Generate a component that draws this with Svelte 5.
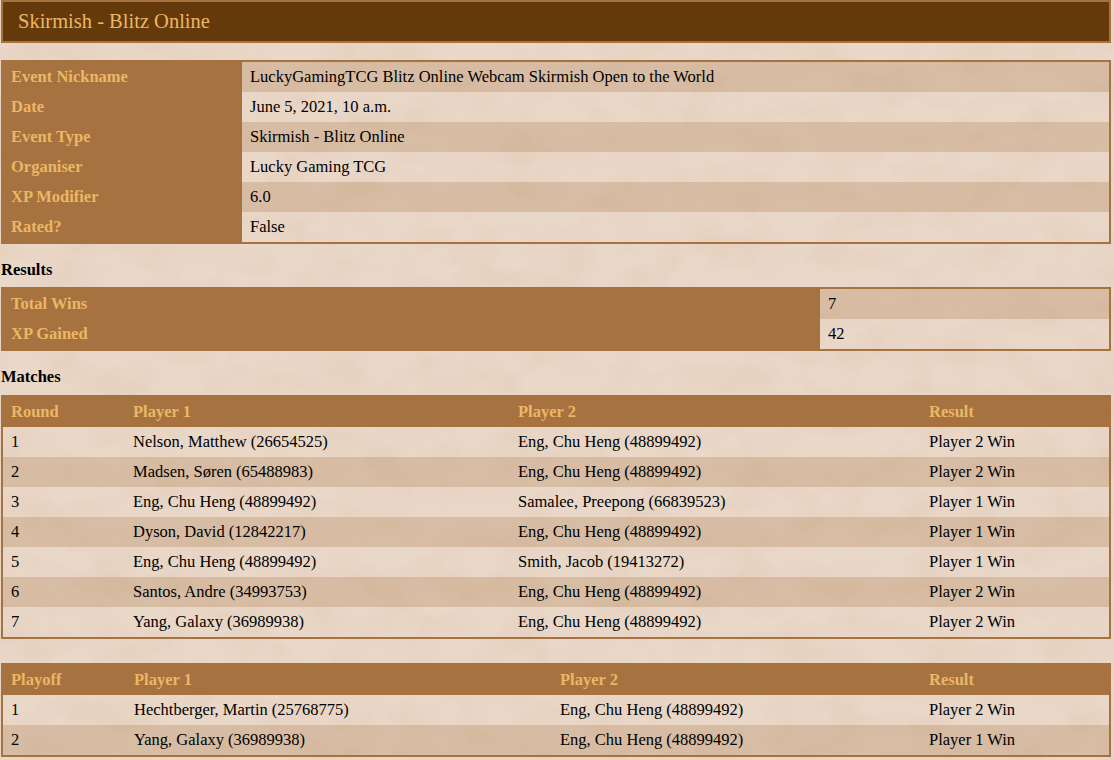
<script>
  const info = [
    ['Event Nickname', 'LuckyGamingTCG Blitz Online Webcam Skirmish Open to the World'],
    ['Date', 'June 5, 2021, 10 a.m.'],
    ['Event Type', 'Skirmish - Blitz Online'],
    ['Organiser', 'Lucky Gaming TCG'],
    ['XP Modifier', '6.0'],
    ['Rated?', 'False']
  ];
  const results = [
    ['Total Wins', '7'],
    ['XP Gained', '42']
  ];
  const me = 'Eng, Chu Heng (48899492)';
  const matches = [
    ['1', 'Nelson, Matthew (26654525)', me, 'Player 2 Win'],
    ['2', 'Madsen, Søren (65488983)', me, 'Player 2 Win'],
    ['3', me, 'Samalee, Preepong (66839523)', 'Player 1 Win'],
    ['4', 'Dyson, David (12842217)', me, 'Player 1 Win'],
    ['5', me, 'Smith, Jacob (19413272)', 'Player 1 Win'],
    ['6', 'Santos, Andre (34993753)', me, 'Player 2 Win'],
    ['7', 'Yang, Galaxy (36989938)', me, 'Player 2 Win']
  ];
  const playoffs = [
    ['1', 'Hechtberger, Martin (25768775)', me, 'Player 2 Win'],
    ['2', 'Yang, Galaxy (36989938)', me, 'Player 1 Win']
  ];
</script>

<!-- parchment texture behind everything -->
<svg class="paper" aria-hidden="true" width="1114" height="760">
  <filter id="grain" x="0" y="0" width="100%" height="100%">
    <feTurbulence type="fractalNoise" baseFrequency="0.022 0.03" numOctaves="6" seed="11" />
    <feColorMatrix values="0 0 0 0 0.74  0 0 0 0 0.56  0 0 0 0 0.42  0.7 0 0 0 -0.26" />
  </filter>
  <rect width="1114" height="760" filter="url(#grain)" />
</svg>

<div class="page">
  <header><h1>Skirmish - Blitz Online</h1></header>

  <table class="info">
    <colgroup><col class="c-label" /><col /></colgroup>
    <tbody>
      {#each info as [label, value]}
        <tr><th>{label}</th><td>{value}</td></tr>
      {/each}
    </tbody>
  </table>

  <h2>Results</h2>
  <table class="results">
    <colgroup><col class="c-res" /><col /></colgroup>
    <tbody>
      {#each results as [label, value]}
        <tr><th>{label}</th><td>{value}</td></tr>
      {/each}
    </tbody>
  </table>

  <h2>Matches</h2>
  <table class="list">
    <colgroup><col class="m1" /><col class="m2" /><col class="m3" /><col /></colgroup>
    <thead>
      <tr><th>Round</th><th>Player 1</th><th>Player 2</th><th>Result</th></tr>
    </thead>
    <tbody>
      {#each matches as row}
        <tr>{#each row as cell}<td>{cell}</td>{/each}</tr>
      {/each}
    </tbody>
  </table>

  <table class="list playoff">
    <colgroup><col class="p1" /><col class="p2" /><col class="p3" /><col /></colgroup>
    <thead>
      <tr><th>Playoff</th><th>Player 1</th><th>Player 2</th><th>Result</th></tr>
    </thead>
    <tbody>
      {#each playoffs as row}
        <tr>{#each row as cell}<td>{cell}</td>{/each}</tr>
      {/each}
    </tbody>
  </table>
</div>

<style>
  :global(body) {
    background: #e9d7c8;
    color: #000;
    font-family: "Liberation Serif", serif;
    font-size: 16.5px;
    overflow: hidden;
  }
  .paper { position: absolute; left: 0; top: 0; }
  .page { position: relative; padding: 0 3px 0 1px; }

  header {
    background: #653a0b;
    border: 2px solid #a67240;
    height: 39px;
    display: flex;
    align-items: center;
    padding-left: 15px;
  }
  h1 {
    margin: 0;
    color: #eab765;
    font-size: 20.5px;
    font-weight: normal;
  }
  h2 {
    margin: 17px 0 0;
    font-size: 16.5px;
    line-height: 18px;
    font-weight: bold;
  }

  table {
    width: 100%;
    table-layout: fixed;
    border-collapse: separate;
    border-spacing: 0;
    border: 2px solid #a67240;
  }
  th, td {
    height: 30px;
    padding: 0 8px;
    text-align: left;
    box-sizing: border-box;
  }
  th { background: #a67240; color: #eab765; font-weight: bold; }
  tbody tr:nth-child(odd) td { background: rgba(176, 128, 84, 0.3); }

  .info { margin-top: 17px; height: 184px; }
  .c-label { width: 239px; }
  .results { margin-top: 8px; }
  .c-res { width: 817px; }
  .list { margin-top: 9px; }
  /* rows of the list tables start on the light stripe */
  .list tbody tr:nth-child(odd) td { background: transparent; }
  .list tbody tr:nth-child(even) td { background: rgba(176, 128, 84, 0.3); }
  .m1 { width: 122px; }
  .m2 { width: 385px; }
  .m3 { width: 411px; }
  .playoff { margin-top: 24px; }
  .p1 { width: 123px; }
  .p2 { width: 426px; }
  .p3 { width: 369px; }
</style>
